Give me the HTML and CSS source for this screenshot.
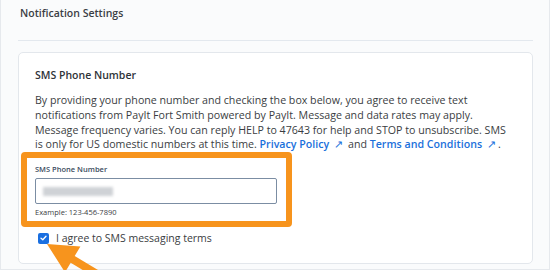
FILE: index.html
```
<!DOCTYPE html>
<html lang="en">
<head>
  <meta charset="UTF-8" />
  <meta name="viewport" content="width=device-width, initial-scale=1" />
  <title>Notification Settings</title>
  <link rel="stylesheet" href="styles.css">
</head>
<body>

  <div class="panel">
    <h1 class="panel-title">Notification Settings</h1>

    <div class="card">
      <h2 class="card-title">SMS Phone Number</h2>
      <p class="terms">
        By providing your phone number and checking the box below, you agree to receive text
        notifications from PayIt Fort Smith powered by PayIt. Message and data rates may apply.
        Message frequency varies. You can reply HELP to 47643 for help and STOP to unsubscribe. SMS
        is only for US domestic numbers at this time.
        <a href="#">Privacy Policy<span class="ext">&#8599;</span></a> and
        <a href="#">Terms and Conditions<span class="ext">&#8599;</span></a>.
      </p>

      <div class="field highlight">
        <label for="phone">SMS Phone Number</label>
        <div class="input-box" id="phone"><span class="blur"></span></div>
        <small>Example: 123-456-7890</small>
      </div>

      <label class="agree">
        <span class="check">
          <svg width="7" height="6" viewBox="0 0 7 6"><path d="M1 3.2 L2.8 4.8 L6 1.2" fill="none" stroke="#fff" stroke-width="1.3" stroke-linecap="round" stroke-linejoin="round"/></svg>
        </span>
        I agree to SMS messaging terms
      </label>
    </div>

    <!-- annotation arrow -->
    <svg class="arrow" width="551" height="290" viewBox="0 0 551 290">
      <polygon points="47,244 80.4,246.5 74.7,256 117,281.4 113,288.2 70.7,262.8 65,272.3" fill="#f7941d"/>
    </svg>
  </div>

</body>
</html>
```
FILE: styles.css
```
body {
  margin: 0;
  background: #fff;
  font-family: 'Open Sans', sans-serif;
  color: #3a3d42;
  overflow: hidden;
}

.panel {
  position: relative;
  width: 515px;
  height: 269px;
  padding: 0 16px 0 17px;
  background: #fafbfc;
  border: 1px solid #e6e9ed;
  border-top: none;
}

.panel-title {
  margin: 0;
  padding: 6px 0 20px 2px;
  font-size: 10.5px;
  line-height: 14px;
  font-weight: 600;
  color: #3b3e44;
  border-bottom: 1px solid #e3e8ee;
}

.card {
  margin-top: 11px;
  height: 210px;
  padding: 0 16px;
  background: #fff;
  border: 1px solid #e3e7ec;
  border-radius: 5px;
}

.card-title {
  margin: 0;
  padding-top: 15px;
  font-size: 10.5px;
  line-height: 14px;
  font-weight: 600;
  color: #2f3338;
}

.terms {
  margin: 11px 0 0;
  max-width: 475px;
  font-size: 10.65px;
  line-height: 14.8px;
  color: #3a3d42;
}

.terms a {
  color: #1a6fdb;
  font-weight: 600;
  text-decoration: none;
}

.ext {
  display: inline-block;
  margin: 0 2px 0 5px;
  font-weight: 400;
  font-size: 11px;
  line-height: 10px;
}

.field {
  display: flex;
  flex-direction: column;
  margin: 0 0 0 -14px;
  width: 242px;
  padding: 6px 9px 4px 8px;
}

.highlight {
  border: 6px solid #f7941d;
  border-radius: 4px;
}

.field label {
  font-size: 7.5px;
  line-height: 10px;
  font-weight: 600;
  color: #3b4b5e;
  margin-bottom: 4px;
}

.input-box {
  height: 24px;
  border: 1px solid #7b8da3;
  border-radius: 2px;
  display: flex;
  align-items: center;
  padding-left: 7px;
}

.blur {
  width: 70px;
  height: 9px;
  background: #cfd2d6;
  filter: blur(1.5px);
}

.field small {
  font-size: 7.5px;
  line-height: 10px;
  color: #3b3e44;
  margin-top: 3px;
}

.agree {
  display: flex;
  align-items: center;
  gap: 7px;
  margin: 4px 0 0 3px;
  font-size: 10.5px;
  line-height: 14px;
  color: #3a3d42;
}

.check {
  width: 11px;
  height: 11px;
  border-radius: 2px;
  background: #1a6fe0;
  display: flex;
  align-items: center;
  justify-content: center;
}

.arrow {
  position: absolute;
  left: -1px;
  top: 0;
  pointer-events: none;
}
```
